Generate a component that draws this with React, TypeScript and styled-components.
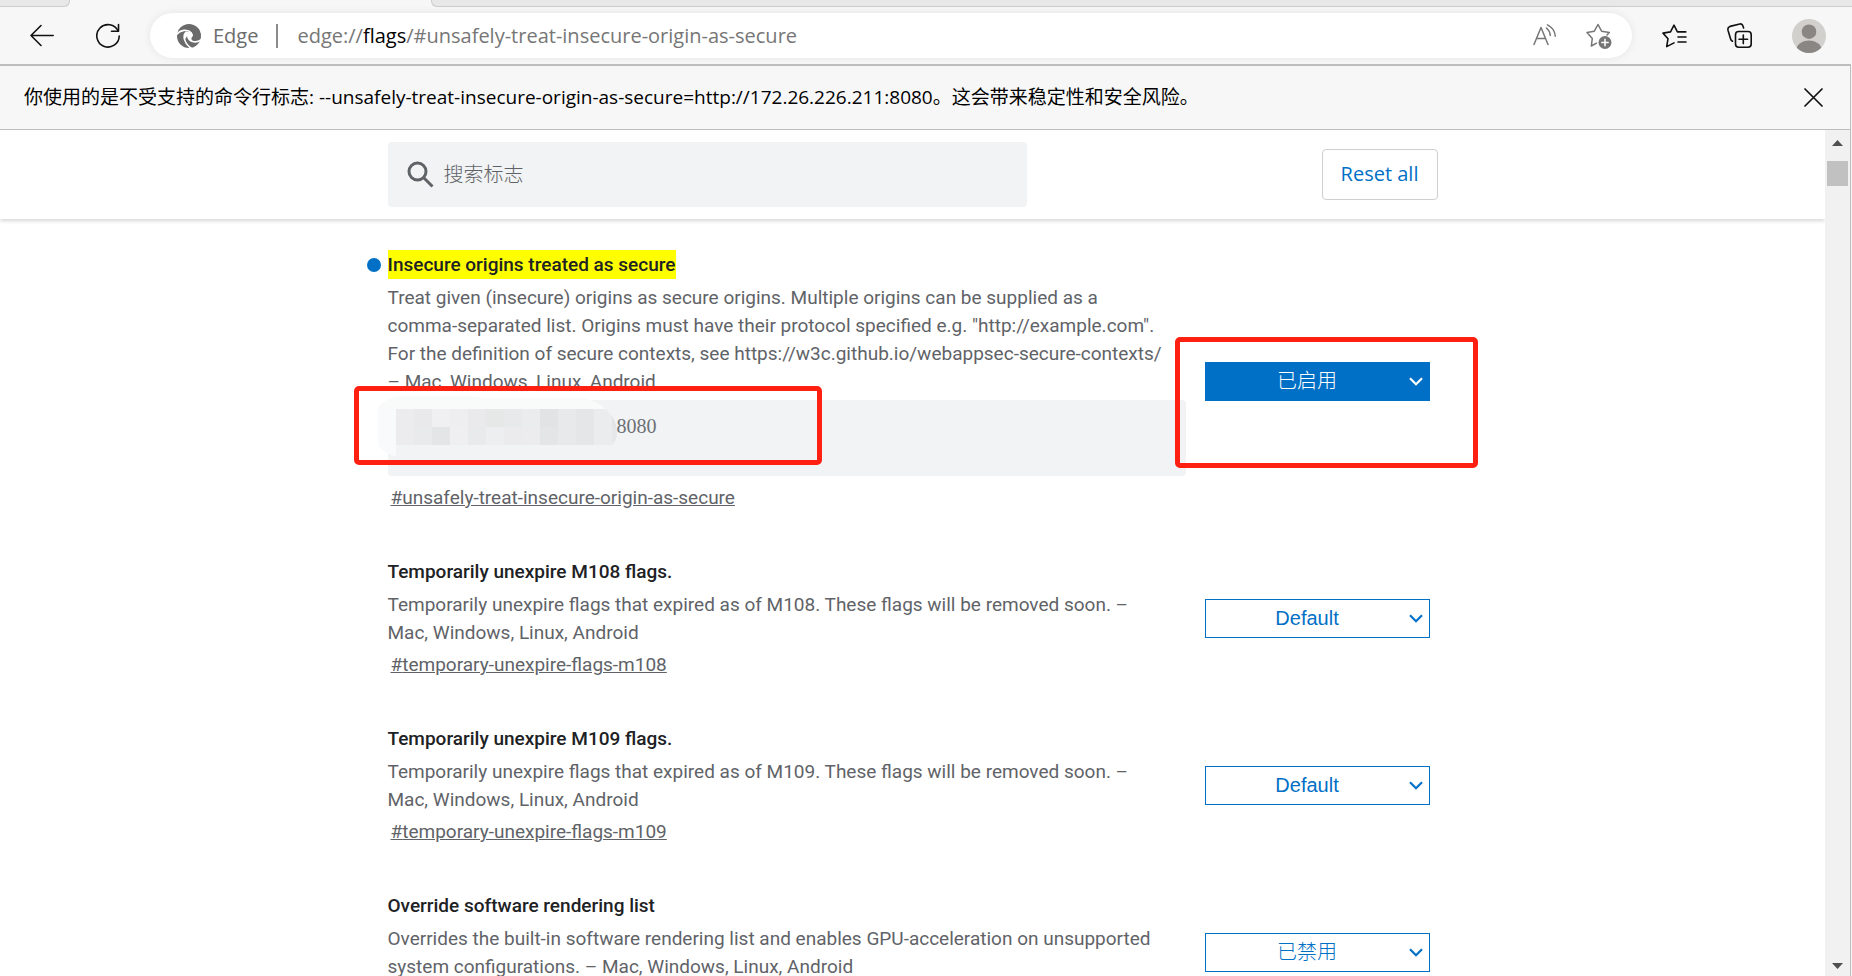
import React from "react";
import styled, { createGlobalStyle } from "styled-components";

const UI_FONT = `"Open Sans", "Noto Sans CJK SC", sans-serif`;
const CJK_FONT = `"Noto Sans CJK SC", sans-serif`;
const BLUE = "#0070c6";
const RED = "#ff2012";

const GlobalStyle = createGlobalStyle`
  *, *::before, *::after { box-sizing: border-box; }
  body { margin: 0; background: #fff; font-family: Roboto, "Noto Sans CJK SC", sans-serif; }
  button, input, select, textarea { margin: 0; padding: 0; border: 0; background: none; border-radius: 0; outline: none; }
  svg { display: block; }
`;

const Browser = styled.div`
  display: flex;
  flex-direction: column;
  height: 100vh;
  overflow: hidden;
  background: #f7f7f7;
`;

const TabStrip = styled.div`
  display: flex;
  height: 7px;
  flex: none;
`;

const TabEdge = styled.div<{ $side: "left" | "right" }>`
  background: #e8e8e8;
  border-bottom: 1px solid #cdcdcd;
  ${(p) =>
    p.$side === "left"
      ? "width: 70px; border-right: 1px solid #cdcdcd; border-bottom-right-radius: 6px;"
      : "flex: 1; border-left: 1px solid #cdcdcd; border-bottom-left-radius: 6px;"}
`;

const ActiveTab = styled.div`
  width: 361px;
`;

const Toolbar = styled.div`
  display: flex;
  align-items: center;
  flex: none;
  height: 57px;
  padding: 0 26px 0 30px;
`;

const IconButton = styled.button<{ $color?: string }>`
  display: flex;
  flex: none;
  color: ${(p) => p.$color ?? "#111"};
  cursor: pointer;
`;

const NavButtons = styled.div`
  display: flex;
  align-items: center;
  gap: 42px;
  margin-right: 30px;
`;

const ToolButtons = styled.div`
  display: flex;
  align-items: center;
  gap: 40px;
  margin-left: 30px;
`;

const AddressBar = styled.div`
  display: flex;
  align-items: center;
  flex: 1;
  height: 45px;
  padding: 0 20px 0 27px;
  border-radius: 23px;
  background: #fff;
  box-shadow: 0 0 8px rgba(0, 0, 0, 0.08);
  font: 20px/28px ${UI_FONT};
  color: #767676;
`;

const SiteName = styled.span`
  margin-left: 12px;
  color: #6b6b6b;
`;

const Separator = styled.span`
  width: 2px;
  height: 24px;
  margin: 0 19px 0 18px;
  background: #8c8c8c;
`;

const Url = styled.span`
  flex: 1;
  white-space: nowrap;
  b { font-weight: 400; color: #000; }
`;

const AddressActions = styled.div`
  display: flex;
  align-items: center;
  gap: 29px;
`;

const Frame = styled.div`
  display: flex;
  flex-direction: column;
  flex: 1;
  min-height: 0;
  margin-right: 1px;
  border-top: 2px solid #bdbdbd;
  border-right: 1px solid #bdbdbd;
`;

const InfoBar = styled.div`
  display: flex;
  align-items: center;
  justify-content: space-between;
  flex: none;
  height: 64px;
  padding: 0 27px 0 24px;
  border-bottom: 1px solid #bdbdbd;
`;

const InfoText = styled.span`
  padding-bottom: 2px;
  font: 19px/28px ${UI_FONT};
  color: #000;
  white-space: nowrap;
`;

const Viewport = styled.div`
  display: flex;
  flex: 1;
  min-height: 0;
`;

const Page = styled.div`
  flex: 1;
  min-width: 0;
  overflow: hidden;
  background: #fff;
`;

const ScrollBar = styled.div`
  display: flex;
  flex-direction: column;
  align-items: center;
  width: 25px;
  padding: 10px 2px 7px;
  background: #f1f1f1;
`;

const Thumb = styled.div`
  width: 21px;
  height: 25px;
  margin: 15px 0 auto;
  background: #c1c1c1;
`;

const Column = styled.div`
  width: 1050px;
  max-width: 100%;
  margin: 0 auto;
`;

const Header = styled.header`
  background: #fff;
  box-shadow: 0 2px 4px rgba(0, 0, 0, 0.16);
`;

const HeaderRow = styled(Column)`
  display: flex;
  align-items: center;
  justify-content: space-between;
  padding: 12px 0;
`;

const SearchBox = styled.label`
  display: flex;
  align-items: center;
  gap: 10px;
  width: 639px;
  height: 65px;
  padding-left: 19px;
  border-radius: 4px;
  background: #f1f3f4;
  color: #5f6368;
`;

const SearchInput = styled.input`
  flex: 1;
  padding-bottom: 2px;
  font: 300 20px/28px ${CJK_FONT};
  color: #5f6368;
  &::placeholder { color: #5f6368; opacity: 1; }
`;

const ResetButton = styled.button`
  width: 116px;
  height: 51px;
  padding-bottom: 2px;
  border: 1px solid #cfcfcf;
  border-radius: 4px;
  background: #fff;
  font: 20px/28px ${UI_FONT};
  color: ${BLUE};
`;

const FlagList = styled(Column)`
  display: flex;
  flex-direction: column;
  gap: 45px;
  padding-top: 31px;
`;

const Flag = styled.section`
  display: flex;
  align-items: center;
  gap: 19px;
`;

const FlagBody = styled.div`
  flex: none;
  width: 798px;
  font-size: 19px;
  line-height: 28px;
  color: #5f6368;
`;

const FlagTitle = styled.h2<{ $changed?: boolean }>`
  position: relative;
  width: fit-content;
  margin: 0 0 5px;
  font-size: 19px;
  font-weight: 500;
  line-height: 29px;
  color: #202124;
  ${(p) =>
    p.$changed &&
    `
    background: #ff0;
    &::before {
      content: "";
      position: absolute;
      left: -21px;
      top: 8px;
      width: 14px;
      height: 14px;
      border-radius: 7px;
      background: ${BLUE};
    }
  `}
`;

const Description = styled.p`
  margin: 0;
  white-space: pre-line;
`;

const Permalink = styled.a`
  display: block;
  width: fit-content;
  margin: 4px 0 0 3px;
  color: #5f6368;
  text-decoration: underline;
`;

const OriginField = styled.div`
  position: relative;
  display: flex;
  margin: 4px 0 8px;
`;

const OriginInput = styled.textarea`
  width: 100%;
  height: 76px;
  padding: 12px 8px 12px 229px;
  border-radius: 4px;
  background: #f1f3f4;
  resize: none;
  font: 20px/28px "Liberation Serif", serif;
  color: #6d7074;
`;

const Mosaic = styled.svg`
  position: absolute;
  left: -10px;
  top: -4px;
`;

const Callout = styled.div<{ $x: number; $y: number; $w: number; $h: number }>`
  position: absolute;
  left: ${(p) => p.$x}px;
  top: ${(p) => p.$y}px;
  width: ${(p) => p.$w}px;
  height: ${(p) => p.$h}px;
  border: 5px solid ${RED};
  border-radius: 5px;
  pointer-events: none;
`;

const SelectWrap = styled.div<{ $active?: boolean }>`
  position: relative;
  flex: none;
  width: 225px;
  color: ${(p) => (p.$active ? "#fff" : BLUE)};
`;

const Select = styled.select<{ $active?: boolean }>`
  appearance: none;
  display: block;
  width: 100%;
  height: 39px;
  padding: 0 29px 0 9px;
  border: 1px solid ${BLUE};
  background: ${(p) => (p.$active ? BLUE : "#fff")};
  font: 300 20px/28px "Liberation Sans", "Noto Sans CJK SC", sans-serif;
  color: inherit;
  text-align: center;
  text-align-last: center;
`;

const Chevron = styled.svg`
  position: absolute;
  right: 7px;
  top: 15px;
  pointer-events: none;
`;

const BackIcon = () => (
  <svg width="24" height="24" viewBox="0 0 24 24" fill="none" stroke="currentColor" strokeWidth="1.6" strokeLinecap="round" strokeLinejoin="round">
    <path d="M23.2 11.500H1M11 1.500l-10 10 10 10" />
  </svg>
);

const ReloadIcon = () => (
  <svg width="24" height="26" viewBox="0 0 24 26" fill="none" stroke="currentColor" strokeWidth="1.6" strokeLinecap="round" strokeLinejoin="round">
    <path d="M22.2 8.2A11.2 11.2 0 1 0 23.2 13" />
    <path d="M22.5 1.5v6.8h-7" />
  </svg>
);

const EdgeLogo = () => (
  <svg width="24" height="24" viewBox="0 0 24 24">
    <circle cx="12" cy="12" r="12" fill="#6b6b6b" />
    <g fill="none" stroke="#fff" strokeWidth="1.700">
      <path d="M-.5 10.500C3 5.800 10.500 4.600 14.500 9" />
      <path d="M9.500 7.500C5.200 11.500 7 19.500 14.500 24.500" />
      <path d="M11 12.500c.8 4.500 7 7.600 13.500 3.300" />
    </g>
    <path d="M8.800 8.200c3-1.600 6.700-.2 7.200 2.600.2 1.300-.6 2-1.200 2.600-.8.900-.4 2 .4 3.200-3-.6-4.800-2.400-5-4.400-1 .8-1.700 2-1.900 3.300-.8-3-.6-5.600.5-7.300z" fill="#fff" />
  </svg>
);

const ReadAloudIcon = () => (
  <svg width="24" height="24" viewBox="0 0 24 24" fill="none" stroke="currentColor" strokeWidth="1.500" strokeLinecap="round" strokeLinejoin="round">
    <path d="M1 20.500L8 3.500l7 17M3.500 14.500h9" />
    <path d="M13.500 4a11 11 0 0 1 3.800 7.500M14.500 .9a14 14 0 0 1 7.800 11.300" />
  </svg>
);

const FavoriteAddIcon = () => (
  <svg width="26" height="26" viewBox="0 0 26 26" fill="none" stroke="currentColor" strokeWidth="1.500" strokeLinejoin="round" strokeLinecap="round">
    <path d="M10.500 20.200L5.300 23 6.300 15.400 1 9.500l7.300-1.300L12 1.500l3.600 6.700 7.700 1.300-2.300 2.500" />
    <circle cx="19" cy="19.500" r="6.500" fill="currentColor" stroke="none" />
    <path d="M19 16.300v6.400M15.800 19.500h6.400" stroke="#fff" />
  </svg>
);

const FavoritesIcon = () => (
  <svg width="25" height="24" viewBox="0 0 25 24" fill="none" stroke="currentColor" strokeWidth="1.600" strokeLinecap="round" strokeLinejoin="round">
    <path d="M12 18.900L4.700 22.600 6 14.700 1 9.100l7.500-1.200L12 1.200l3.400 6.700h8.400M16 13h8M16 18h8" />
  </svg>
);

const CollectionsIcon = () => (
  <svg width="25" height="25" viewBox="0 0 25 25" fill="none" stroke="currentColor" strokeWidth="1.600" strokeLinecap="round" strokeLinejoin="round">
    <path d="M5.500 18.200c-1-.4-1.600-1.200-1.900-2.200L1 7.200C.6 5.400 1.300 4 3 3.400L12.800 1c1.700-.4 2.700.4 3.200 2l.6 2" />
    <rect x="8.500" y="8.500" width="15.700" height="15.700" rx="3.200" />
    <path d="M16.300 12v8.600M12 16.300h8.600" />
  </svg>
);

const AvatarIcon = () => (
  <svg width="34" height="34" viewBox="0 0 34 34">
    <clipPath id="avatar-clip"><circle cx="17" cy="17" r="17" /></clipPath>
    <g clipPath="url(#avatar-clip)">
      <rect width="34" height="34" fill="#d2d0cd" />
      <circle cx="17" cy="12.700" r="7.300" fill="#8a8683" />
      <ellipse cx="17" cy="32" rx="13" ry="10.500" fill="#8a8683" />
    </g>
  </svg>
);

const CloseIcon = () => (
  <svg width="19" height="19" viewBox="0 0 19 19" fill="none" stroke="currentColor" strokeWidth="1.700" strokeLinecap="round">
    <path d="M1 1l17 17M18 1L1 18" />
  </svg>
);

const SearchIcon = () => (
  <svg width="27" height="27" viewBox="0 0 27 27" fill="none" stroke="currentColor" strokeWidth="3">
    <circle cx="10.500" cy="10.500" r="8.500" />
    <path d="M16.500 16.500l9 9" />
  </svg>
);

const ScrollArrow = ({ down = false }: { down?: boolean }) => (
  <svg width="11" height="6" viewBox="0 0 11 6">
    <path d={down ? "M0 0h11L5.500 6z" : "M0 6h11L5.500 0z"} fill="#505050" />
  </svg>
);

const MOSAIC_ROWS = [
  ["#ececee", "#e9e9eb", "#f0f0f2", "#eeeef0", "#eaeaec", "#e6e8e8", "#e8e9ea", "#ebecee", "#e2e3e5", "#e8e9eb", "#e5e6e8", "#ebecee", "#e2e3e5"],
  ["#ececee", "#e9eaec", "#e4e5e7", "#efeff1", "#e9eaec", "#edeef0", "#ebebed", "#ececee", "#e4e5e7", "#e8e9eb", "#e5e6e8", "#ebecee", "#e6e7e9"],
];

const MosaicPatch = () => (
  <Mosaic width="239" height="61" viewBox="0 0 239 61" aria-hidden="true">
    <clipPath id="mosaic-clip">
      <path d="M0 12C6 4 14 0 26 0h60c10 0 16 2 24 2h90c20 0 39 16 39 34 0 6-2 10-5 13v11H18C10 59 4 55 0 49z" />
    </clipPath>
    <g clipPath="url(#mosaic-clip)">
      <rect width="239" height="13" fill="#f9fafa" />
      <rect y="13" width="18" height="48" fill="#f8fafc" />
      <rect x="18" y="49" width="221" height="12" fill="#f1f3f5" />
      {MOSAIC_ROWS.map((row, r) =>
        row.map((color, c) => (
          <rect key={`${r}-${c}`} x={18 + c * 18} y={13 + r * 18} width="18" height="18" fill={color} />
        )),
      )}
    </g>
  </Mosaic>
);

interface FlagData {
  title: string;
  id: string;
  description: string;
  value: string;
  origins?: string;
  changed?: boolean;
}

const FLAGS: FlagData[] = [
  {
    title: "Insecure origins treated as secure",
    id: "unsafely-treat-insecure-origin-as-secure",
    description:
      'Treat given (insecure) origins as secure origins. Multiple origins can be supplied as a\ncomma-separated list. Origins must have their protocol specified e.g. "http://example.com".\nFor the definition of secure contexts, see https://w3c.github.io/webappsec-secure-contexts/\n– Mac, Windows, Linux, Android',
    value: "已启用",
    origins: "8080",
    changed: true,
  },
  {
    title: "Temporarily unexpire M108 flags.",
    id: "temporary-unexpire-flags-m108",
    description:
      "Temporarily unexpire flags that expired as of M108. These flags will be removed soon. –\nMac, Windows, Linux, Android",
    value: "Default",
  },
  {
    title: "Temporarily unexpire M109 flags.",
    id: "temporary-unexpire-flags-m109",
    description:
      "Temporarily unexpire flags that expired as of M109. These flags will be removed soon. –\nMac, Windows, Linux, Android",
    value: "Default",
  },
  {
    title: "Override software rendering list",
    id: "ignore-gpu-blocklist",
    description:
      "Overrides the built-in software rendering list and enables GPU-acceleration on unsupported\nsystem configurations. – Mac, Windows, Linux, Android",
    value: "已禁用",
  },
];

const FlagRow = ({ flag }: { flag: FlagData }) => (
  <Flag>
    <FlagBody>
      <FlagTitle $changed={flag.changed} id={`${flag.id}-title`}>{flag.title}</FlagTitle>
      <Description>{flag.description}</Description>
      {flag.origins && (
        <OriginField>
          <OriginInput aria-labelledby={`${flag.id}-title`} defaultValue={flag.origins} spellCheck={false} />
          <MosaicPatch />
          <Callout $x={-34} $y={-14} $w={468} $h={79} />
        </OriginField>
      )}
      <Permalink href={`#${flag.id}`}>#{flag.id}</Permalink>
    </FlagBody>
    <SelectWrap $active={flag.changed}>
      <Select $active={flag.changed} aria-labelledby={`${flag.id}-title`} defaultValue={flag.value}>
        <option>{flag.value}</option>
      </Select>
      <Chevron width="14" height="9" viewBox="0 0 14 9" fill="none" stroke="currentColor" strokeWidth="2.200">
        <path d="M1 1.200l6 6 6-6" />
      </Chevron>
      {flag.changed && <Callout $x={-30} $y={-25} $w={303} $h={131} />}
    </SelectWrap>
  </Flag>
);

export default function App() {
  return (
    <Browser>
      <GlobalStyle />
      <TabStrip>
        <TabEdge $side="left" />
        <ActiveTab />
        <TabEdge $side="right" />
      </TabStrip>
      <Toolbar>
        <NavButtons>
          <IconButton aria-label="Back"><BackIcon /></IconButton>
          <IconButton aria-label="Refresh"><ReloadIcon /></IconButton>
        </NavButtons>
        <AddressBar>
          <EdgeLogo />
          <SiteName>Edge</SiteName>
          <Separator />
          <Url>edge://<b>flags</b>/#unsafely-treat-insecure-origin-as-secure</Url>
          <AddressActions>
            <IconButton $color="#767676" aria-label="Read aloud"><ReadAloudIcon /></IconButton>
            <IconButton $color="#767676" aria-label="Add to favorites"><FavoriteAddIcon /></IconButton>
          </AddressActions>
        </AddressBar>
        <ToolButtons>
          <IconButton aria-label="Favorites"><FavoritesIcon /></IconButton>
          <IconButton aria-label="Collections"><CollectionsIcon /></IconButton>
          <IconButton aria-label="Profile"><AvatarIcon /></IconButton>
        </ToolButtons>
      </Toolbar>
      <Frame>
        <InfoBar>
          <InfoText>你使用的是不受支持的命令行标志: --unsafely-treat-insecure-origin-as-secure=http://172.26.226.211:8080。这会带来稳定性和安全风险。</InfoText>
          <IconButton aria-label="Close"><CloseIcon /></IconButton>
        </InfoBar>
        <Viewport>
          <Page>
            <Header>
              <HeaderRow>
                <SearchBox>
                  <SearchIcon />
                  <SearchInput placeholder="搜索标志" aria-label="搜索标志" />
                </SearchBox>
                <ResetButton>Reset all</ResetButton>
              </HeaderRow>
            </Header>
            <FlagList as="main">
              {FLAGS.map((flag) => (
                <FlagRow key={flag.id} flag={flag} />
              ))}
            </FlagList>
          </Page>
          <ScrollBar aria-hidden="true">
            <ScrollArrow />
            <Thumb />
            <ScrollArrow down />
          </ScrollBar>
        </Viewport>
      </Frame>
    </Browser>
  );
}
